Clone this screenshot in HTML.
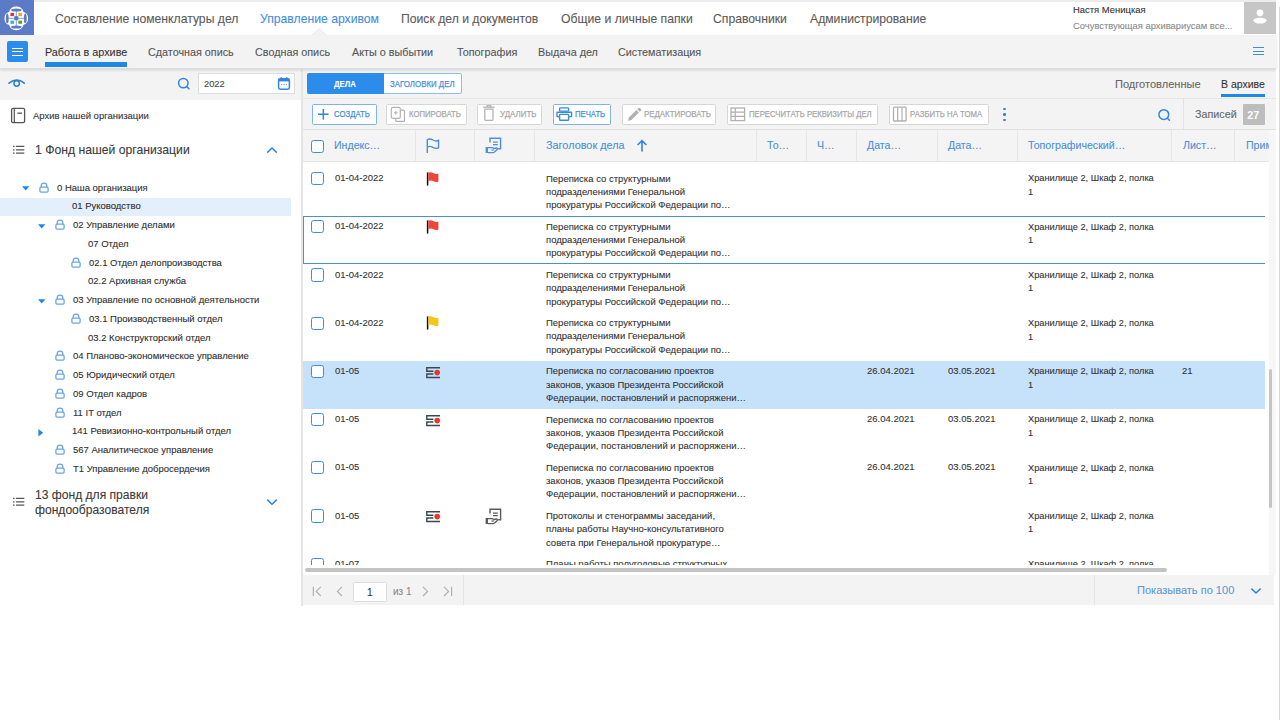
<!DOCTYPE html>
<html><head><meta charset="utf-8"><title>Архив</title>
<style>
html,body{margin:0;padding:0;width:1280px;height:720px;overflow:hidden;background:#fff}
body{position:relative;font-family:"Liberation Sans",sans-serif}
.t{position:absolute;line-height:0;white-space:nowrap;-webkit-text-stroke:0.1px currentColor}
.m{position:absolute;white-space:nowrap;-webkit-text-stroke:0.1px currentColor}
.r{position:absolute}
</style></head><body>
<div class="r" style="left:0.00px;top:0.00px;width:1276.00px;height:2.00px;background:#ececec;"></div>
<div class="r" style="left:0.00px;top:2.00px;width:1276.00px;height:33.00px;background:#ffffff;"></div>
<div class="r" style="left:1279.00px;top:7.00px;width:1.00px;height:713.00px;background:#d8d8d8;"></div>
<div class="r" style="left:0.00px;top:0.00px;width:34.00px;height:35.00px;background:#5b7bc6;"></div>
<svg class="r" style="left:0px;top:0px;overflow:visible" width="34" height="35" viewBox="0 0 34 35"><path d="M9.6 12.4 A6.85 6.85 0 0 1 23.0 12.4 A6.26 6.26 0 0 1 23.0 24.4 A6.9 6.9 0 0 1 9.6 24.4 A6.24 6.24 0 0 1 9.6 12.4 Z" fill="#fff" stroke="#fff" stroke-width="1.2" stroke-linejoin="round"/>
<g fill="#5b7bc6"><ellipse cx="16.3" cy="9.9" rx="5.2" ry="1.5"/><ellipse cx="16.3" cy="27" rx="5.2" ry="1.5"/><ellipse cx="7.3" cy="18.4" rx="1.4" ry="4.9"/><ellipse cx="25.3" cy="18.4" rx="1.4" ry="4.9"/></g>
<path d="M8.6 18.3 H24 M16.3 11 V26" stroke="#6a86cc" stroke-width="0.8"/>
<rect x="10.4" y="12.9" width="3.7" height="3.2" fill="#d5383a"/><rect x="18.3" y="12.9" width="3.7" height="3.2" fill="#f0a23a"/>
<rect x="10.4" y="20.6" width="3.7" height="3.2" fill="#3ab0d8"/><rect x="18.3" y="20.6" width="3.7" height="3.2" fill="#4ea54a"/>
<rect x="14.3" y="16.2" width="4" height="4" fill="#5577c4"/></svg>
<div class="t" style="left:54.50px;top:18.70px;font-size:12.810px;color:#5a5a5a;font-weight:400;transform:scaleX(0.9524);transform-origin:0 0;">Составление номенклатуры дел</div>
<div class="t" style="left:260.00px;top:18.70px;font-size:12.810px;color:#3f8fe0;font-weight:400;transform:scaleX(0.9524);transform-origin:0 0;">Управление архивом</div>
<div class="t" style="left:400.50px;top:18.70px;font-size:12.810px;color:#5a5a5a;font-weight:400;transform:scaleX(0.9524);transform-origin:0 0;">Поиск дел и документов</div>
<div class="t" style="left:560.50px;top:18.70px;font-size:12.810px;color:#5a5a5a;font-weight:400;transform:scaleX(0.9524);transform-origin:0 0;">Общие и личные папки</div>
<div class="t" style="left:712.90px;top:18.70px;font-size:12.810px;color:#5a5a5a;font-weight:400;transform:scaleX(0.9524);transform-origin:0 0;">Справочники</div>
<div class="t" style="left:809.80px;top:18.70px;font-size:12.810px;color:#5a5a5a;font-weight:400;transform:scaleX(0.9524);transform-origin:0 0;">Администрирование</div>
<div class="t" style="left:1072.60px;top:9.50px;font-size:9.922px;color:#333;font-weight:400;transform:scaleX(0.9524);transform-origin:0 0;">Настя Меницкая</div>
<div class="t" style="left:1072.60px;top:25.90px;font-size:9.870px;color:#8a8a8a;font-weight:400;transform:scaleX(0.9524);transform-origin:0 0;">Сочувствующая архивариусам все...</div>
<div class="r" style="left:1244.00px;top:2.00px;width:31.50px;height:32.00px;background:#c6c6c6;"></div>
<svg class="r" style="left:1244px;top:2px;overflow:visible" width="32" height="32" viewBox="0 0 32 32"><circle cx="16" cy="10.8" r="3.4" fill="#fff"/><ellipse cx="16" cy="18.6" rx="6.6" ry="2.9" fill="#fff"/></svg>
<div class="r" style="left:0.00px;top:35.00px;width:1276.00px;height:32.50px;background:#f3f3f3;box-shadow:0 1px 0 #dcdcdc, 0 2px 3px rgba(0,0,0,0.14);z-index:2"></div>
<svg class="r" style="left:311px;top:28px;overflow:visible" width="17" height="8" viewBox="0 0 17 8"><path d="M0.5 7.5 L8.2 0.6 L15.9 7.5 Z" fill="#f3f3f3" stroke="#e4e4e4" stroke-width="0.8"/><rect x="0" y="6.9" width="17" height="1.2" fill="#f3f3f3"/></svg>
<div class="r" style="left:7.00px;top:41.00px;width:21.00px;height:21.00px;background:#2c8cec;border-radius:2px;z-index:3"></div>
<div class="r" style="left:12.00px;top:47.50px;width:11.00px;height:1.30px;background:#fff;z-index:3"></div>
<div class="r" style="left:12.00px;top:51.10px;width:11.00px;height:1.30px;background:#fff;z-index:3"></div>
<div class="r" style="left:12.00px;top:54.70px;width:11.00px;height:1.30px;background:#fff;z-index:3"></div>
<div class="t" style="left:45.00px;top:51.90px;font-size:11.340px;color:#333;font-weight:400;z-index:3;transform:scaleX(0.9524);transform-origin:0 0;">Работа в архиве</div>
<div class="r" style="left:45.00px;top:62.00px;width:82.00px;height:5.00px;background:#1e88e5;z-index:3"></div>
<div class="t" style="left:148.00px;top:51.90px;font-size:11.340px;color:#555555;font-weight:400;z-index:3;transform:scaleX(0.9524);transform-origin:0 0;">Сдаточная опись</div>
<div class="t" style="left:255.00px;top:51.90px;font-size:11.340px;color:#555555;font-weight:400;z-index:3;transform:scaleX(0.9524);transform-origin:0 0;">Сводная опись</div>
<div class="t" style="left:352.00px;top:51.90px;font-size:11.340px;color:#555555;font-weight:400;z-index:3;transform:scaleX(0.9524);transform-origin:0 0;">Акты о выбытии</div>
<div class="t" style="left:457.00px;top:51.90px;font-size:11.340px;color:#555555;font-weight:400;z-index:3;transform:scaleX(0.9524);transform-origin:0 0;">Топография</div>
<div class="t" style="left:538.00px;top:51.90px;font-size:11.340px;color:#555555;font-weight:400;z-index:3;transform:scaleX(0.9524);transform-origin:0 0;">Выдача дел</div>
<div class="t" style="left:618.00px;top:51.90px;font-size:11.340px;color:#555555;font-weight:400;z-index:3;transform:scaleX(0.9524);transform-origin:0 0;">Систематизация</div>
<div class="r" style="left:1253.00px;top:47.30px;width:11.00px;height:1.10px;background:#3a8edb;z-index:3"></div>
<div class="r" style="left:1253.00px;top:50.80px;width:11.00px;height:1.10px;background:#3a8edb;z-index:3"></div>
<div class="r" style="left:1253.00px;top:54.30px;width:11.00px;height:1.10px;background:#3a8edb;z-index:3"></div>
<div class="r" style="left:0.00px;top:67.00px;width:301.50px;height:32.50px;background:#f3f3f3;"></div>
<div class="r" style="left:0.00px;top:99.50px;width:301.50px;height:506.00px;background:#ffffff;"></div>
<div class="r" style="left:301.30px;top:67.00px;width:1.70px;height:538.50px;background:#e4e4e4;"></div>
<svg class="r" style="left:8px;top:78px;overflow:visible" width="18" height="10" viewBox="0 0 18 10"><path d="M1 5.2 Q8.7 -1.2 16.3 5.2" fill="none" stroke="#2d7fd3" stroke-width="1.6" stroke-linecap="round"/><circle cx="8.7" cy="5.5" r="2.7" fill="none" stroke="#2d7fd3" stroke-width="1.5"/></svg>
<svg class="r" style="left:177px;top:77px;overflow:visible" width="14" height="14" viewBox="0 0 14 14"><circle cx="6.3" cy="6.1" r="4.7" fill="none" stroke="#2f86dd" stroke-width="1.5"/><path d="M9.8 9.6 L12 11.8" stroke="#2f86dd" stroke-width="1.5" stroke-linecap="round"/></svg>
<div class="r" style="left:198.20px;top:73.00px;width:96.50px;height:21.00px;background:#fff;border:1px solid #dedede;box-sizing:border-box;"></div>
<div class="t" style="left:204.00px;top:83.50px;font-size:9.765px;color:#444;font-weight:400;transform:scaleX(0.9524);transform-origin:0 0;">2022</div>
<svg class="r" style="left:277px;top:76px;overflow:visible" width="14" height="15" viewBox="0 0 14 15"><rect x="1.6" y="2.8" width="10.8" height="10.4" rx="1.6" fill="none" stroke="#2f86dd" stroke-width="1.5"/><rect x="1.6" y="2.8" width="10.8" height="2.6" fill="#2f86dd"/><path d="M4.2 1.2 V3.5 M9.8 1.2 V3.5" stroke="#2f86dd" stroke-width="1.4"/><path d="M4.3 8.6 h1 M6.6 8.6 h1 M8.9 8.6 h1" stroke="#2f86dd" stroke-width="0.9"/></svg>
<svg class="r" style="left:10px;top:107px;overflow:visible" width="17" height="17" viewBox="0 0 17 17"><rect x="1.6" y="1.4" width="13" height="14.2" rx="1.4" fill="none" stroke="#555" stroke-width="1.3"/><path d="M4.3 1.4 V15.6" stroke="#555" stroke-width="1.2"/><path d="M7.4 6.2 H12" stroke="#555" stroke-width="1.3"/></svg>
<div class="t" style="left:33.30px;top:115.80px;font-size:9.975px;color:#333;font-weight:400;transform:scaleX(0.9524);transform-origin:0 0;">Архив нашей организации</div>
<svg class="r" style="left:12px;top:145px;overflow:visible" width="14" height="10" viewBox="0 0 14 10"><path d="M1 1.4 h1.6 M1 4.9 h1.6 M1 8.1 h1.6 M4 1.4 h8.3 M4 4.9 h8.3 M4 8.1 h8.3" stroke="#555" stroke-width="1.2"/></svg>
<div class="t" style="left:35.40px;top:149.50px;font-size:12.810px;color:#3a3a3a;font-weight:400;transform:scaleX(0.9524);transform-origin:0 0;">1 Фонд нашей организации</div>
<svg class="r" style="left:266px;top:146px;overflow:visible" width="12" height="8" viewBox="0 0 12 8"><path d="M1.2 6.6 L6 2 L10.8 6.6" fill="none" stroke="#2f86dd" stroke-width="1.5"/></svg>
<div class="r" style="left:0.00px;top:198.00px;width:291.00px;height:18.00px;background:#e3effa;"></div>
<svg class="r" style="left:21.5px;top:186.2px;overflow:visible" width="8" height="5" viewBox="0 0 8 5"><path d="M0 0.2 H7.4 L3.7 4.4 Z" fill="#1e88e5"/></svg>
<svg class="r" style="left:39.2px;top:181.7px;overflow:visible" width="10" height="11" viewBox="0 0 10 11"><path d="M2.2 5.2 V3.9 A2.8 2.8 0 0 1 7.8 3.9 V5.2" fill="none" stroke="#6aa6e0" stroke-width="1.3"/><rect x="0.9" y="5.2" width="8.2" height="4.9" rx="1.1" fill="none" stroke="#6aa6e0" stroke-width="1.3"/></svg>
<div class="t" style="left:57.00px;top:187.50px;font-size:9.975px;color:#2e2e2e;font-weight:400;transform:scaleX(0.9524);transform-origin:0 0;">0 Наша организация</div>
<div class="t" style="left:71.50px;top:206.25px;font-size:9.975px;color:#2e2e2e;font-weight:400;transform:scaleX(0.9524);transform-origin:0 0;">01 Руководство</div>
<svg class="r" style="left:37.5px;top:223.7px;overflow:visible" width="8" height="5" viewBox="0 0 8 5"><path d="M0 0.2 H7.4 L3.7 4.4 Z" fill="#1e88e5"/></svg>
<svg class="r" style="left:55.2px;top:219.2px;overflow:visible" width="10" height="11" viewBox="0 0 10 11"><path d="M2.2 5.2 V3.9 A2.8 2.8 0 0 1 7.8 3.9 V5.2" fill="none" stroke="#6aa6e0" stroke-width="1.3"/><rect x="0.9" y="5.2" width="8.2" height="4.9" rx="1.1" fill="none" stroke="#6aa6e0" stroke-width="1.3"/></svg>
<div class="t" style="left:73.00px;top:225.00px;font-size:9.975px;color:#2e2e2e;font-weight:400;transform:scaleX(0.9524);transform-origin:0 0;">02 Управление делами</div>
<div class="t" style="left:87.80px;top:243.75px;font-size:9.975px;color:#2e2e2e;font-weight:400;transform:scaleX(0.9524);transform-origin:0 0;">07 Отдел</div>
<svg class="r" style="left:71px;top:256.7px;overflow:visible" width="10" height="11" viewBox="0 0 10 11"><path d="M2.2 5.2 V3.9 A2.8 2.8 0 0 1 7.8 3.9 V5.2" fill="none" stroke="#6aa6e0" stroke-width="1.3"/><rect x="0.9" y="5.2" width="8.2" height="4.9" rx="1.1" fill="none" stroke="#6aa6e0" stroke-width="1.3"/></svg>
<div class="t" style="left:89.00px;top:262.50px;font-size:9.975px;color:#2e2e2e;font-weight:400;transform:scaleX(0.9524);transform-origin:0 0;">02.1 Отдел делопроизводства</div>
<div class="t" style="left:87.50px;top:281.25px;font-size:9.975px;color:#2e2e2e;font-weight:400;transform:scaleX(0.9524);transform-origin:0 0;">02.2 Архивная служба</div>
<svg class="r" style="left:37.5px;top:298.7px;overflow:visible" width="8" height="5" viewBox="0 0 8 5"><path d="M0 0.2 H7.4 L3.7 4.4 Z" fill="#1e88e5"/></svg>
<svg class="r" style="left:55.2px;top:294.2px;overflow:visible" width="10" height="11" viewBox="0 0 10 11"><path d="M2.2 5.2 V3.9 A2.8 2.8 0 0 1 7.8 3.9 V5.2" fill="none" stroke="#6aa6e0" stroke-width="1.3"/><rect x="0.9" y="5.2" width="8.2" height="4.9" rx="1.1" fill="none" stroke="#6aa6e0" stroke-width="1.3"/></svg>
<div class="t" style="left:73.00px;top:300.00px;font-size:9.975px;color:#2e2e2e;font-weight:400;transform:scaleX(0.9524);transform-origin:0 0;">03 Управление по основной деятельности</div>
<svg class="r" style="left:71px;top:312.95px;overflow:visible" width="10" height="11" viewBox="0 0 10 11"><path d="M2.2 5.2 V3.9 A2.8 2.8 0 0 1 7.8 3.9 V5.2" fill="none" stroke="#6aa6e0" stroke-width="1.3"/><rect x="0.9" y="5.2" width="8.2" height="4.9" rx="1.1" fill="none" stroke="#6aa6e0" stroke-width="1.3"/></svg>
<div class="t" style="left:89.00px;top:318.75px;font-size:9.975px;color:#2e2e2e;font-weight:400;transform:scaleX(0.9524);transform-origin:0 0;">03.1 Производственный отдел</div>
<div class="t" style="left:87.50px;top:337.50px;font-size:9.975px;color:#2e2e2e;font-weight:400;transform:scaleX(0.9524);transform-origin:0 0;">03.2 Конструкторский отдел</div>
<svg class="r" style="left:55.2px;top:350.45px;overflow:visible" width="10" height="11" viewBox="0 0 10 11"><path d="M2.2 5.2 V3.9 A2.8 2.8 0 0 1 7.8 3.9 V5.2" fill="none" stroke="#6aa6e0" stroke-width="1.3"/><rect x="0.9" y="5.2" width="8.2" height="4.9" rx="1.1" fill="none" stroke="#6aa6e0" stroke-width="1.3"/></svg>
<div class="t" style="left:73.00px;top:356.25px;font-size:9.975px;color:#2e2e2e;font-weight:400;transform:scaleX(0.9524);transform-origin:0 0;">04 Планово-экономическое управление</div>
<svg class="r" style="left:55.2px;top:369.2px;overflow:visible" width="10" height="11" viewBox="0 0 10 11"><path d="M2.2 5.2 V3.9 A2.8 2.8 0 0 1 7.8 3.9 V5.2" fill="none" stroke="#6aa6e0" stroke-width="1.3"/><rect x="0.9" y="5.2" width="8.2" height="4.9" rx="1.1" fill="none" stroke="#6aa6e0" stroke-width="1.3"/></svg>
<div class="t" style="left:73.00px;top:375.00px;font-size:9.975px;color:#2e2e2e;font-weight:400;transform:scaleX(0.9524);transform-origin:0 0;">05 Юридический отдел</div>
<svg class="r" style="left:55.2px;top:387.95px;overflow:visible" width="10" height="11" viewBox="0 0 10 11"><path d="M2.2 5.2 V3.9 A2.8 2.8 0 0 1 7.8 3.9 V5.2" fill="none" stroke="#6aa6e0" stroke-width="1.3"/><rect x="0.9" y="5.2" width="8.2" height="4.9" rx="1.1" fill="none" stroke="#6aa6e0" stroke-width="1.3"/></svg>
<div class="t" style="left:73.00px;top:393.75px;font-size:9.975px;color:#2e2e2e;font-weight:400;transform:scaleX(0.9524);transform-origin:0 0;">09 Отдел кадров</div>
<svg class="r" style="left:55.2px;top:406.7px;overflow:visible" width="10" height="11" viewBox="0 0 10 11"><path d="M2.2 5.2 V3.9 A2.8 2.8 0 0 1 7.8 3.9 V5.2" fill="none" stroke="#6aa6e0" stroke-width="1.3"/><rect x="0.9" y="5.2" width="8.2" height="4.9" rx="1.1" fill="none" stroke="#6aa6e0" stroke-width="1.3"/></svg>
<div class="t" style="left:73.00px;top:412.50px;font-size:9.975px;color:#2e2e2e;font-weight:400;transform:scaleX(0.9524);transform-origin:0 0;">11 IT отдел</div>
<svg class="r" style="left:38px;top:429.15px;overflow:visible" width="6" height="8" viewBox="0 0 6 8"><path d="M0.4 0 V7.4 L5.2 3.7 Z" fill="#1e88e5"/></svg>
<div class="t" style="left:72.00px;top:431.25px;font-size:9.975px;color:#2e2e2e;font-weight:400;transform:scaleX(0.9524);transform-origin:0 0;">141 Ревизионно-контрольный отдел</div>
<svg class="r" style="left:55.2px;top:444.2px;overflow:visible" width="10" height="11" viewBox="0 0 10 11"><path d="M2.2 5.2 V3.9 A2.8 2.8 0 0 1 7.8 3.9 V5.2" fill="none" stroke="#6aa6e0" stroke-width="1.3"/><rect x="0.9" y="5.2" width="8.2" height="4.9" rx="1.1" fill="none" stroke="#6aa6e0" stroke-width="1.3"/></svg>
<div class="t" style="left:73.00px;top:450.00px;font-size:9.975px;color:#2e2e2e;font-weight:400;transform:scaleX(0.9524);transform-origin:0 0;">567 Аналитическое управление</div>
<svg class="r" style="left:55.2px;top:462.95px;overflow:visible" width="10" height="11" viewBox="0 0 10 11"><path d="M2.2 5.2 V3.9 A2.8 2.8 0 0 1 7.8 3.9 V5.2" fill="none" stroke="#6aa6e0" stroke-width="1.3"/><rect x="0.9" y="5.2" width="8.2" height="4.9" rx="1.1" fill="none" stroke="#6aa6e0" stroke-width="1.3"/></svg>
<div class="t" style="left:73.00px;top:468.75px;font-size:9.975px;color:#2e2e2e;font-weight:400;transform:scaleX(0.9524);transform-origin:0 0;">Т1 Управление добросердечия</div>
<svg class="r" style="left:12px;top:497px;overflow:visible" width="14" height="10" viewBox="0 0 14 10"><path d="M1 1.4 h1.6 M1 4.9 h1.6 M1 8.1 h1.6 M4 1.4 h8.3 M4 4.9 h8.3 M4 8.1 h8.3" stroke="#555" stroke-width="1.2"/></svg>
<div class="m" style="left:35.00px;top:488.35px;font-size:12.705px;line-height:14.5px;color:#3a3a3a;transform:scaleX(0.9524);transform-origin:0 0;">13 фонд для правки<br>фондообразователя</div>
<svg class="r" style="left:266px;top:498px;overflow:visible" width="12" height="8" viewBox="0 0 12 8"><path d="M1.2 1.6 L6 6.2 L10.8 1.6" fill="none" stroke="#2f86dd" stroke-width="1.5"/></svg>
<div class="r" style="left:303.00px;top:67.00px;width:973.00px;height:62.00px;background:#f3f3f3;"></div>
<div class="r" style="left:303.00px;top:97.50px;width:973.00px;height:1.00px;background:#e6e6e6;"></div>
<div class="r" style="left:307.00px;top:72.70px;width:154.70px;height:21.50px;background:#fff;border:1px solid #8dbdf0;box-sizing:border-box;border-radius:2px"></div>
<div class="r" style="left:307.00px;top:72.70px;width:76.60px;height:21.50px;background:#2c8cec;border-radius:2px 0 0 2px"></div>
<div class="t" style="left:334.40px;top:84.00px;font-size:9.000px;color:#fff;font-weight:700;transform:scaleX(0.8640);transform-origin:0 0;">ДЕЛА</div>
<div class="t" style="left:390.00px;top:84.00px;font-size:9.000px;color:#4a8fd8;font-weight:400;-webkit-text-stroke:0.25px currentColor;transform:scaleX(0.8750);transform-origin:0 0;">ЗАГОЛОВКИ ДЕЛ</div>
<div class="t" style="left:1114.70px;top:83.50px;font-size:11.623px;color:#666;font-weight:400;transform:scaleX(0.9524);transform-origin:0 0;">Подготовленные</div>
<div class="t" style="left:1221.00px;top:84.00px;font-size:11.046px;color:#333;font-weight:400;transform:scaleX(0.9524);transform-origin:0 0;">В архиве</div>
<div class="r" style="left:1221.00px;top:94.00px;width:44.00px;height:3.40px;background:#1e88e5;"></div>
<div class="r" style="left:312.20px;top:103.80px;width:64.40px;height:20.80px;background:#fff;border:1px solid #7fb3ea;box-sizing:border-box;border-radius:1.5px"></div>
<svg class="r" style="left:317px;top:108px;overflow:visible" width="13" height="13" viewBox="0 0 13 13"><path d="M6.3 1 V11.6 M1 6.3 H11.6" stroke="#2f86dd" stroke-width="1.5"/></svg>
<div class="t" style="left:334.40px;top:114.00px;font-size:9.000px;color:#4a8fd8;font-weight:400;-webkit-text-stroke:0.25px currentColor;transform:scaleX(0.8620);transform-origin:0 0;">СОЗДАТЬ</div>
<div class="r" style="left:386.40px;top:103.80px;width:80.50px;height:20.80px;background:#fff;border:1px solid #d6d6d6;box-sizing:border-box;border-radius:1.5px"></div>
<svg class="r" style="left:390px;top:106px;overflow:visible" width="16" height="17" viewBox="0 0 16 17"><path d="M10.3 4.2 H13.6 Q14.5 4.2 14.5 5.1 V14.4 Q14.5 15.3 13.6 15.3 H6.6 Q5.7 15.3 5.7 14.4 V12.3" fill="none" stroke="#b3b3b3" stroke-width="1.2"/><rect x="1.3" y="1.3" width="9" height="11" rx="1.6" fill="none" stroke="#b3b3b3" stroke-width="1.2"/><path d="M5.8 4.9 V8.7 M3.9 6.8 H7.7" stroke="#b3b3b3" stroke-width="1.1"/></svg>
<div class="t" style="left:409.20px;top:114.00px;font-size:9.000px;color:#a8a8a8;font-weight:400;-webkit-text-stroke:0.25px currentColor;transform:scaleX(0.8590);transform-origin:0 0;">КОПИРОВАТЬ</div>
<div class="r" style="left:477.00px;top:103.80px;width:65.40px;height:20.80px;background:#fff;border:1px solid #d6d6d6;box-sizing:border-box;border-radius:1.5px"></div>
<svg class="r" style="left:482px;top:104px;overflow:visible" width="14" height="18" viewBox="0 0 14 18"><path d="M1.2 3.2 H12.6" stroke="#b3b3b3" stroke-width="1.3"/><path d="M5 3.2 V1.6 H8.8 V3.2" fill="none" stroke="#b3b3b3" stroke-width="1.1"/><path d="M2.8 5.2 V15.2 Q2.8 16.4 4 16.4 H9.8 Q11 16.4 11 15.2 V5.2 Z" fill="none" stroke="#b3b3b3" stroke-width="1.3"/></svg>
<div class="t" style="left:499.50px;top:114.00px;font-size:9.000px;color:#a8a8a8;font-weight:400;-webkit-text-stroke:0.25px currentColor;transform:scaleX(0.8820);transform-origin:0 0;">УДАЛИТЬ</div>
<div class="r" style="left:553.00px;top:103.80px;width:58.30px;height:20.80px;background:#fff;border:1px solid #7fb3ea;box-sizing:border-box;border-radius:1.5px"></div>
<svg class="r" style="left:556px;top:107px;overflow:visible" width="17" height="15" viewBox="0 0 17 15"><rect x="3.6" y="0.8" width="9" height="3.4" rx="0.8" fill="none" stroke="#3a8ad8" stroke-width="1.3"/><path d="M3.4 9.6 H1 V5.2 H15.6 V9.6 H13.2" fill="none" stroke="#3a8ad8" stroke-width="1.4" stroke-linejoin="round"/><rect x="3.6" y="7.4" width="9" height="5.8" rx="0.8" fill="none" stroke="#3a8ad8" stroke-width="1.4"/></svg>
<div class="t" style="left:574.80px;top:114.00px;font-size:9.000px;color:#4a8fd8;font-weight:400;-webkit-text-stroke:0.25px currentColor;transform:scaleX(0.8580);transform-origin:0 0;">ПЕЧАТЬ</div>
<div class="r" style="left:622.00px;top:103.80px;width:94.20px;height:20.80px;background:#fff;border:1px solid #d6d6d6;box-sizing:border-box;border-radius:1.5px"></div>
<svg class="r" style="left:627px;top:106px;overflow:visible" width="15" height="16" viewBox="0 0 15 16"><path d="M1 15 L1.9 11.6 L9.4 4.1 L11.9 6.6 L4.4 14.1 Z" fill="#b0b0b0"/><path d="M10.3 3.2 L11.5 2 Q12.2 1.3 12.9 2 L14 3.1 Q14.7 3.8 14 4.5 L12.8 5.7 Z" fill="#b0b0b0"/></svg>
<div class="t" style="left:643.50px;top:114.00px;font-size:9.000px;color:#a8a8a8;font-weight:400;-webkit-text-stroke:0.25px currentColor;transform:scaleX(0.8750);transform-origin:0 0;">РЕДАКТИРОВАТЬ</div>
<div class="r" style="left:726.50px;top:103.80px;width:151.50px;height:20.80px;background:#fff;border:1px solid #d6d6d6;box-sizing:border-box;border-radius:1.5px"></div>
<svg class="r" style="left:730px;top:107px;overflow:visible" width="16" height="15" viewBox="0 0 16 15"><rect x="1" y="1" width="13.6" height="12.6" fill="none" stroke="#b0b0b0" stroke-width="1.3"/><path d="M5.3 1 V13.6 M1 5.2 H14.6 M1 9.4 H14.6" stroke="#b0b0b0" stroke-width="1.2"/></svg>
<div class="t" style="left:748.80px;top:114.00px;font-size:9.000px;color:#a8a8a8;font-weight:400;-webkit-text-stroke:0.25px currentColor;transform:scaleX(0.8570);transform-origin:0 0;">ПЕРЕСЧИТАТЬ РЕКВИЗИТЫ ДЕЛ</div>
<div class="r" style="left:888.70px;top:103.80px;width:100.50px;height:20.80px;background:#fff;border:1px solid #d6d6d6;box-sizing:border-box;border-radius:1.5px"></div>
<svg class="r" style="left:892px;top:106px;overflow:visible" width="16" height="16" viewBox="0 0 16 16"><rect x="1.5" y="1.2" width="12.6" height="13.8" rx="0.8" fill="none" stroke="#b0b0b0" stroke-width="1.3"/><path d="M5.7 1.2 V15 M10 1.2 V15" stroke="#b0b0b0" stroke-width="1.2"/></svg>
<div class="t" style="left:910.20px;top:114.00px;font-size:9.000px;color:#a8a8a8;font-weight:400;-webkit-text-stroke:0.25px currentColor;transform:scaleX(0.8630);transform-origin:0 0;">РАЗБИТЬ НА ТОМА</div>
<div class="r" style="left:1003.40px;top:107.80px;width:2.60px;height:2.40px;background:#2f86dd;border-radius:50%"></div>
<div class="r" style="left:1003.40px;top:113.20px;width:2.60px;height:2.40px;background:#2f86dd;border-radius:50%"></div>
<div class="r" style="left:1003.40px;top:118.60px;width:2.60px;height:2.40px;background:#2f86dd;border-radius:50%"></div>
<svg class="r" style="left:1157px;top:108px;overflow:visible" width="15" height="14" viewBox="0 0 15 14"><circle cx="6.8" cy="6.6" r="4.9" fill="none" stroke="#2f86dd" stroke-width="1.5"/><path d="M10.4 10.2 L12.4 12.2" stroke="#2f86dd" stroke-width="1.5" stroke-linecap="round"/></svg>
<div class="r" style="left:1183.00px;top:98.50px;width:1.00px;height:30.50px;background:#e2e2e2;"></div>
<div class="t" style="left:1195.30px;top:114.40px;font-size:11.298px;color:#666;font-weight:400;transform:scaleX(0.9524);transform-origin:0 0;">Записей</div>
<div class="r" style="left:1242.60px;top:103.80px;width:22.40px;height:21.20px;background:#bdbdbd;border-radius:1px"></div>
<div class="t" style="left:1247.20px;top:114.60px;font-size:10.800px;color:#fbfbfb;font-weight:700;">27</div>
<div class="r" style="left:303.00px;top:128.50px;width:973.00px;height:1.00px;background:#e2e2e2;"></div>
<div class="r" style="left:303.00px;top:129.50px;width:972.00px;height:31.50px;background:#f4f4f4;"></div>
<div class="r" style="left:303.00px;top:160.50px;width:972.00px;height:1.00px;background:#e6e6e6;"></div>
<div class="r" style="left:414.50px;top:129.50px;width:1.00px;height:31.00px;background:#e6e6e6;"></div>
<div class="r" style="left:474.20px;top:129.50px;width:1.00px;height:31.00px;background:#e6e6e6;"></div>
<div class="r" style="left:534.00px;top:129.50px;width:1.00px;height:31.00px;background:#e6e6e6;"></div>
<div class="r" style="left:755.70px;top:129.50px;width:1.00px;height:31.00px;background:#e6e6e6;"></div>
<div class="r" style="left:805.90px;top:129.50px;width:1.00px;height:31.00px;background:#e6e6e6;"></div>
<div class="r" style="left:856.00px;top:129.50px;width:1.00px;height:31.00px;background:#e6e6e6;"></div>
<div class="r" style="left:936.50px;top:129.50px;width:1.00px;height:31.00px;background:#e6e6e6;"></div>
<div class="r" style="left:1016.70px;top:129.50px;width:1.00px;height:31.00px;background:#e6e6e6;"></div>
<div class="r" style="left:1171.30px;top:129.50px;width:1.00px;height:31.00px;background:#e6e6e6;"></div>
<div class="r" style="left:1234.20px;top:129.50px;width:1.00px;height:31.00px;background:#e6e6e6;"></div>
<div class="r" style="left:311.20px;top:140.00px;width:13.30px;height:13.30px;background:#fff;border:1.7px solid #3a8ee0;box-sizing:border-box;border-radius:2.5px"></div>
<div class="t" style="left:334.00px;top:145.00px;font-size:11.130px;color:#4a8fd8;font-weight:400;transform:scaleX(0.9524);transform-origin:0 0;">Индекс…</div>
<svg class="r" style="left:425px;top:138px;overflow:visible" width="16" height="16" viewBox="0 0 16 16"><path d="M2.3 15 V1.6 Q5 0.2 8 2 Q11 3.8 13.6 2.2 V9.6 Q11 11.2 8 9.4 Q5 7.6 2.3 9" fill="none" stroke="#4a8fd8" stroke-width="1.4" stroke-linejoin="round"/></svg>
<svg class="r" style="left:484px;top:137px;overflow:visible" width="18" height="17" viewBox="0 0 18 17"><path d="M6 5.6 V1.3 H16.6 V11.7 H14.2" fill="none" stroke="#4a8fd8" stroke-width="1.4"/><path d="M9 5.2 H13.8 M9 7.7 H13.8" stroke="#4a8fd8" stroke-width="1.3"/><rect x="1.6" y="10" width="2.4" height="6" fill="#4a8fd8"/><path d="M4 10.7 H7.6 Q9 10.7 10 11.5 L12.4 11 Q13.8 11.1 13.2 12.5 L10.6 14.9 Q9.9 15.6 8.7 15.6 H4" fill="none" stroke="#4a8fd8" stroke-width="1.3" stroke-linejoin="round"/><path d="M7.4 13 H10.2" stroke="#4a8fd8" stroke-width="1.1"/></svg>
<div class="t" style="left:546.00px;top:145.00px;font-size:11.435px;color:#4a8fd8;font-weight:400;transform:scaleX(0.9524);transform-origin:0 0;">Заголовок дела</div>
<svg class="r" style="left:636px;top:139px;overflow:visible" width="12" height="13" viewBox="0 0 12 13"><path d="M6 12.4 V1.8 M1.6 6 L6 1.6 L10.4 6" fill="none" stroke="#2f86dd" stroke-width="1.6"/></svg>
<div class="t" style="left:766.70px;top:145.00px;font-size:11.130px;color:#4a8fd8;font-weight:400;transform:scaleX(0.9524);transform-origin:0 0;">То…</div>
<div class="t" style="left:817.00px;top:145.00px;font-size:11.130px;color:#4a8fd8;font-weight:400;transform:scaleX(0.9524);transform-origin:0 0;">Ч…</div>
<div class="t" style="left:867.30px;top:145.00px;font-size:11.130px;color:#4a8fd8;font-weight:400;transform:scaleX(0.9524);transform-origin:0 0;">Дата…</div>
<div class="t" style="left:947.50px;top:145.00px;font-size:11.130px;color:#4a8fd8;font-weight:400;transform:scaleX(0.9524);transform-origin:0 0;">Дата…</div>
<div class="t" style="left:1028.40px;top:145.00px;font-size:11.130px;color:#4a8fd8;font-weight:400;transform:scaleX(0.9524);transform-origin:0 0;">Топографический…</div>
<div class="t" style="left:1182.60px;top:145.00px;font-size:11.130px;color:#4a8fd8;font-weight:400;transform:scaleX(0.9524);transform-origin:0 0;">Лист…</div>
<div class="r" style="left:1246.4px;top:135px;width:28.6px;height:20px;overflow:hidden">
<div class="t" style="left:0.00px;top:10.00px;font-size:11.130px;color:#4a8fd8;font-weight:400;transform:scaleX(0.9524);transform-origin:0 0;">Примечание</div>
</div>
<div class="r" style="left:303.00px;top:161.50px;width:966.00px;height:413.50px;background:#ffffff;"></div>
<div class="r" style="left:1269.00px;top:129.50px;width:7.00px;height:445.50px;background:#f7f7f7;"></div>
<div class="r" style="left:303px;top:161.5px;width:966px;height:403.5px;overflow:hidden">
<div class="r" style="left:8.20px;top:10.50px;width:13.30px;height:13.30px;background:#fff;border:1.7px solid #3a8ee0;box-sizing:border-box;border-radius:2.5px"></div>
<div class="t" style="left:32.00px;top:16.70px;font-size:9.975px;color:#333;font-weight:400;transform:scaleX(0.9524);transform-origin:0 0;">01-04-2022</div>
<svg class="r" style="left:123.19999999999999px;top:10.199999999999989px;overflow:visible" width="14" height="15" viewBox="0 0 14 15"><path d="M1.6 0.4 V13.6" stroke="#111" stroke-width="1.5"/><path d="M2.4 0.6 Q5 -0.4 7.6 1.2 Q10.2 2.6 12.4 1.6 V9.4 Q10.2 10.6 7.6 9.2 Q5 7.8 2.4 9 Z" fill="#f0433a"/></svg>
<div class="m" style="left:242.70px;top:10.05px;font-size:9.975px;line-height:13.3px;color:#333;transform:scaleX(0.9524);transform-origin:0 0;">Переписка со структурными<br>подразделениями Генеральной<br>прокуратуры Российской Федерации по…</div>
<div class="m" style="left:725.20px;top:9.90px;font-size:9.713px;line-height:13.600000000000001px;color:#333;transform:scaleX(0.9524);transform-origin:0 0;">Хранилище 2, Шкаф 2, полка<br>1</div>
<div class="r" style="left:0.00px;top:54.60px;width:962.00px;height:47.80px;background:transparent;border:1.6px solid #4a90d9;box-sizing:border-box;border-right:none"></div>
<div class="r" style="left:8.20px;top:58.70px;width:13.30px;height:13.30px;background:#fff;border:1.7px solid #3a8ee0;box-sizing:border-box;border-radius:2.5px"></div>
<div class="t" style="left:32.00px;top:64.90px;font-size:9.975px;color:#333;font-weight:400;transform:scaleX(0.9524);transform-origin:0 0;">01-04-2022</div>
<svg class="r" style="left:123.19999999999999px;top:58.400000000000006px;overflow:visible" width="14" height="15" viewBox="0 0 14 15"><path d="M1.6 0.4 V13.6" stroke="#111" stroke-width="1.5"/><path d="M2.4 0.6 Q5 -0.4 7.6 1.2 Q10.2 2.6 12.4 1.6 V9.4 Q10.2 10.6 7.6 9.2 Q5 7.8 2.4 9 Z" fill="#f0433a"/></svg>
<div class="m" style="left:242.70px;top:58.25px;font-size:9.975px;line-height:13.3px;color:#333;transform:scaleX(0.9524);transform-origin:0 0;">Переписка со структурными<br>подразделениями Генеральной<br>прокуратуры Российской Федерации по…</div>
<div class="m" style="left:725.20px;top:58.10px;font-size:9.713px;line-height:13.600000000000001px;color:#333;transform:scaleX(0.9524);transform-origin:0 0;">Хранилище 2, Шкаф 2, полка<br>1</div>
<div class="r" style="left:8.20px;top:106.90px;width:13.30px;height:13.30px;background:#fff;border:1.7px solid #3a8ee0;box-sizing:border-box;border-radius:2.5px"></div>
<div class="t" style="left:32.00px;top:113.10px;font-size:9.975px;color:#333;font-weight:400;transform:scaleX(0.9524);transform-origin:0 0;">01-04-2022</div>
<div class="m" style="left:242.70px;top:106.45px;font-size:9.975px;line-height:13.3px;color:#333;transform:scaleX(0.9524);transform-origin:0 0;">Переписка со структурными<br>подразделениями Генеральной<br>прокуратуры Российской Федерации по…</div>
<div class="m" style="left:725.20px;top:106.30px;font-size:9.713px;line-height:13.600000000000001px;color:#333;transform:scaleX(0.9524);transform-origin:0 0;">Хранилище 2, Шкаф 2, полка<br>1</div>
<div class="r" style="left:8.20px;top:155.10px;width:13.30px;height:13.30px;background:#fff;border:1.7px solid #3a8ee0;box-sizing:border-box;border-radius:2.5px"></div>
<div class="t" style="left:32.00px;top:161.30px;font-size:9.975px;color:#333;font-weight:400;transform:scaleX(0.9524);transform-origin:0 0;">01-04-2022</div>
<svg class="r" style="left:123.19999999999999px;top:154.80000000000007px;overflow:visible" width="14" height="15" viewBox="0 0 14 15"><path d="M1.6 0.4 V13.6" stroke="#111" stroke-width="1.5"/><path d="M2.4 0.6 Q5 -0.4 7.6 1.2 Q10.2 2.6 12.4 1.6 V9.4 Q10.2 10.6 7.6 9.2 Q5 7.8 2.4 9 Z" fill="#f5c518"/></svg>
<div class="m" style="left:242.70px;top:154.65px;font-size:9.975px;line-height:13.3px;color:#333;transform:scaleX(0.9524);transform-origin:0 0;">Переписка со структурными<br>подразделениями Генеральной<br>прокуратуры Российской Федерации по…</div>
<div class="m" style="left:725.20px;top:154.50px;font-size:9.713px;line-height:13.600000000000001px;color:#333;transform:scaleX(0.9524);transform-origin:0 0;">Хранилище 2, Шкаф 2, полка<br>1</div>
<div class="r" style="left:0.00px;top:199.40px;width:961.70px;height:48.30px;background:#c6e2fa;"></div>
<div class="r" style="left:8.20px;top:203.30px;width:13.30px;height:13.30px;background:#fff;border:1.7px solid #3a8ee0;box-sizing:border-box;border-radius:2.5px"></div>
<div class="t" style="left:32.00px;top:209.50px;font-size:9.975px;color:#333;font-weight:400;transform:scaleX(0.9524);transform-origin:0 0;">01-05</div>
<svg class="r" style="left:122.60000000000002px;top:205.0px;overflow:visible" width="15" height="12" viewBox="0 0 15 12"><path d="M7.4 4.2 H0.8 V0.8 H14 M7.4 7 H0.8 V10.5 H14" fill="none" stroke="#3c4650" stroke-width="1.4"/><circle cx="11.2" cy="5.6" r="2.8" fill="#e8352e"/></svg>
<div class="m" style="left:242.70px;top:202.85px;font-size:9.975px;line-height:13.3px;color:#333;transform:scaleX(0.9524);transform-origin:0 0;">Переписка по согласованию проектов<br>законов, указов Президента Российской<br>Федерации, постановлений и распоряжени…</div>
<div class="t" style="left:563.60px;top:209.50px;font-size:9.975px;color:#333;font-weight:400;transform:scaleX(0.9524);transform-origin:0 0;">26.04.2021</div>
<div class="t" style="left:644.60px;top:209.50px;font-size:9.975px;color:#333;font-weight:400;transform:scaleX(0.9524);transform-origin:0 0;">03.05.2021</div>
<div class="m" style="left:725.20px;top:202.70px;font-size:9.713px;line-height:13.600000000000001px;color:#333;transform:scaleX(0.9524);transform-origin:0 0;">Хранилище 2, Шкаф 2, полка<br>1</div>
<div class="t" style="left:879.00px;top:209.50px;font-size:9.975px;color:#333;font-weight:400;transform:scaleX(0.9524);transform-origin:0 0;">21</div>
<div class="r" style="left:8.20px;top:251.50px;width:13.30px;height:13.30px;background:#fff;border:1.7px solid #3a8ee0;box-sizing:border-box;border-radius:2.5px"></div>
<div class="t" style="left:32.00px;top:257.70px;font-size:9.975px;color:#333;font-weight:400;transform:scaleX(0.9524);transform-origin:0 0;">01-05</div>
<svg class="r" style="left:122.60000000000002px;top:253.20000000000005px;overflow:visible" width="15" height="12" viewBox="0 0 15 12"><path d="M7.4 4.2 H0.8 V0.8 H14 M7.4 7 H0.8 V10.5 H14" fill="none" stroke="#3c4650" stroke-width="1.4"/><circle cx="11.2" cy="5.6" r="2.8" fill="#e8352e"/></svg>
<div class="m" style="left:242.70px;top:251.05px;font-size:9.975px;line-height:13.3px;color:#333;transform:scaleX(0.9524);transform-origin:0 0;">Переписка по согласованию проектов<br>законов, указов Президента Российской<br>Федерации, постановлений и распоряжени…</div>
<div class="t" style="left:563.60px;top:257.70px;font-size:9.975px;color:#333;font-weight:400;transform:scaleX(0.9524);transform-origin:0 0;">26.04.2021</div>
<div class="t" style="left:644.60px;top:257.70px;font-size:9.975px;color:#333;font-weight:400;transform:scaleX(0.9524);transform-origin:0 0;">03.05.2021</div>
<div class="m" style="left:725.20px;top:250.90px;font-size:9.713px;line-height:13.600000000000001px;color:#333;transform:scaleX(0.9524);transform-origin:0 0;">Хранилище 2, Шкаф 2, полка<br>1</div>
<div class="r" style="left:8.20px;top:299.70px;width:13.30px;height:13.30px;background:#fff;border:1.7px solid #3a8ee0;box-sizing:border-box;border-radius:2.5px"></div>
<div class="t" style="left:32.00px;top:305.90px;font-size:9.975px;color:#333;font-weight:400;transform:scaleX(0.9524);transform-origin:0 0;">01-05</div>
<div class="m" style="left:242.70px;top:299.25px;font-size:9.975px;line-height:13.3px;color:#333;transform:scaleX(0.9524);transform-origin:0 0;">Переписка по согласованию проектов<br>законов, указов Президента Российской<br>Федерации, постановлений и распоряжени…</div>
<div class="t" style="left:563.60px;top:305.90px;font-size:9.975px;color:#333;font-weight:400;transform:scaleX(0.9524);transform-origin:0 0;">26.04.2021</div>
<div class="t" style="left:644.60px;top:305.90px;font-size:9.975px;color:#333;font-weight:400;transform:scaleX(0.9524);transform-origin:0 0;">03.05.2021</div>
<div class="m" style="left:725.20px;top:299.10px;font-size:9.713px;line-height:13.600000000000001px;color:#333;transform:scaleX(0.9524);transform-origin:0 0;">Хранилище 2, Шкаф 2, полка<br>1</div>
<div class="r" style="left:8.20px;top:347.90px;width:13.30px;height:13.30px;background:#fff;border:1.7px solid #3a8ee0;box-sizing:border-box;border-radius:2.5px"></div>
<div class="t" style="left:32.00px;top:354.10px;font-size:9.975px;color:#333;font-weight:400;transform:scaleX(0.9524);transform-origin:0 0;">01-05</div>
<svg class="r" style="left:122.60000000000002px;top:349.6px;overflow:visible" width="15" height="12" viewBox="0 0 15 12"><path d="M7.4 4.2 H0.8 V0.8 H14 M7.4 7 H0.8 V10.5 H14" fill="none" stroke="#3c4650" stroke-width="1.4"/><circle cx="11.2" cy="5.6" r="2.8" fill="#e8352e"/></svg>
<svg class="r" style="left:181.2px;top:346.7px;overflow:visible" width="18" height="17" viewBox="0 0 18 17"><path d="M6 5.6 V1.3 H16.6 V11.7 H14.2" fill="none" stroke="#5a5a5a" stroke-width="1.4"/><path d="M9 5.2 H13.8 M9 7.7 H13.8" stroke="#5a5a5a" stroke-width="1.3"/><rect x="1.6" y="10" width="2.4" height="6" fill="#5a5a5a"/><path d="M4 10.7 H7.6 Q9 10.7 10 11.5 L12.4 11 Q13.8 11.1 13.2 12.5 L10.6 14.9 Q9.9 15.6 8.7 15.6 H4" fill="none" stroke="#5a5a5a" stroke-width="1.3" stroke-linejoin="round"/><path d="M7.4 13 H10.2" stroke="#5a5a5a" stroke-width="1.1"/></svg>
<div class="m" style="left:242.70px;top:347.45px;font-size:9.975px;line-height:13.3px;color:#333;transform:scaleX(0.9524);transform-origin:0 0;">Протоколы и стенограммы заседаний,<br>планы работы Научно-консультативного<br>совета при Генеральной прокуратуре…</div>
<div class="m" style="left:725.20px;top:347.30px;font-size:9.713px;line-height:13.600000000000001px;color:#333;transform:scaleX(0.9524);transform-origin:0 0;">Хранилище 2, Шкаф 2, полка<br>1</div>
<div class="r" style="left:8.20px;top:396.10px;width:13.30px;height:13.30px;background:#fff;border:1.7px solid #3a8ee0;box-sizing:border-box;border-radius:2.5px"></div>
<div class="t" style="left:32.00px;top:402.30px;font-size:9.975px;color:#333;font-weight:400;transform:scaleX(0.9524);transform-origin:0 0;">01-07</div>
<div class="m" style="left:242.70px;top:395.65px;font-size:9.975px;line-height:13.3px;color:#333;transform:scaleX(0.9524);transform-origin:0 0;">Планы работы полугодовые структурных<br>подразделений<br></div>
<div class="m" style="left:725.20px;top:395.50px;font-size:9.713px;line-height:13.600000000000001px;color:#333;transform:scaleX(0.9524);transform-origin:0 0;">Хранилище 2, Шкаф 2, полка<br>1</div>
</div>
<div class="r" style="left:304.80px;top:568.00px;width:862.70px;height:4.00px;background:#c4c4c4;border-radius:2px"></div>
<div class="r" style="left:1268.50px;top:369.00px;width:3.90px;height:139.00px;background:#c4c4c4;border-radius:2px"></div>
<div class="r" style="left:303.00px;top:575.00px;width:971.00px;height:30.40px;background:#f3f3f3;"></div>
<div class="r" style="left:463.30px;top:575.00px;width:1.00px;height:30.40px;background:#e4e4e4;"></div>
<div class="r" style="left:1093.50px;top:575.00px;width:1.00px;height:30.40px;background:#e4e4e4;"></div>
<svg class="r" style="left:312px;top:586px;overflow:visible" width="11" height="11" viewBox="0 0 11 11"><path d="M1.3 0.8 V10 M8.8 0.8 L4.2 5.4 L8.8 10" fill="none" stroke="#b0b0b0" stroke-width="1.2"/></svg>
<svg class="r" style="left:335px;top:586px;overflow:visible" width="9" height="11" viewBox="0 0 9 11"><path d="M7 0.8 L2.4 5.4 L7 10" fill="none" stroke="#b0b0b0" stroke-width="1.2"/></svg>
<div class="r" style="left:352.70px;top:581.50px;width:34.40px;height:20.10px;background:#fff;border:1px solid #dcdcdc;box-sizing:border-box;border-radius:1.5px"></div>
<div class="t" style="left:366.60px;top:592.00px;font-size:10.710px;color:#333;font-weight:400;transform:scaleX(0.9524);transform-origin:0 0;">1</div>
<div class="t" style="left:392.70px;top:591.00px;font-size:10.500px;color:#8a8a8a;font-weight:400;transform:scaleX(0.9524);transform-origin:0 0;">из 1</div>
<svg class="r" style="left:421px;top:586px;overflow:visible" width="9" height="11" viewBox="0 0 9 11"><path d="M2 0.8 L6.6 5.4 L2 10" fill="none" stroke="#b0b0b0" stroke-width="1.2"/></svg>
<svg class="r" style="left:442px;top:586px;overflow:visible" width="11" height="11" viewBox="0 0 11 11"><path d="M2 0.8 L6.6 5.4 L2 10 M9.6 0.8 V10" fill="none" stroke="#b0b0b0" stroke-width="1.2"/></svg>
<div class="t" style="left:1136.60px;top:590.00px;font-size:11.603px;color:#5b9bd5;font-weight:400;transform:scaleX(0.9524);transform-origin:0 0;">Показывать по 100</div>
<svg class="r" style="left:1250px;top:587px;overflow:visible" width="12" height="8" viewBox="0 0 12 8"><path d="M1.4 1.6 L6 6 L10.6 1.6" fill="none" stroke="#2f86dd" stroke-width="1.5"/></svg>
</body></html>
